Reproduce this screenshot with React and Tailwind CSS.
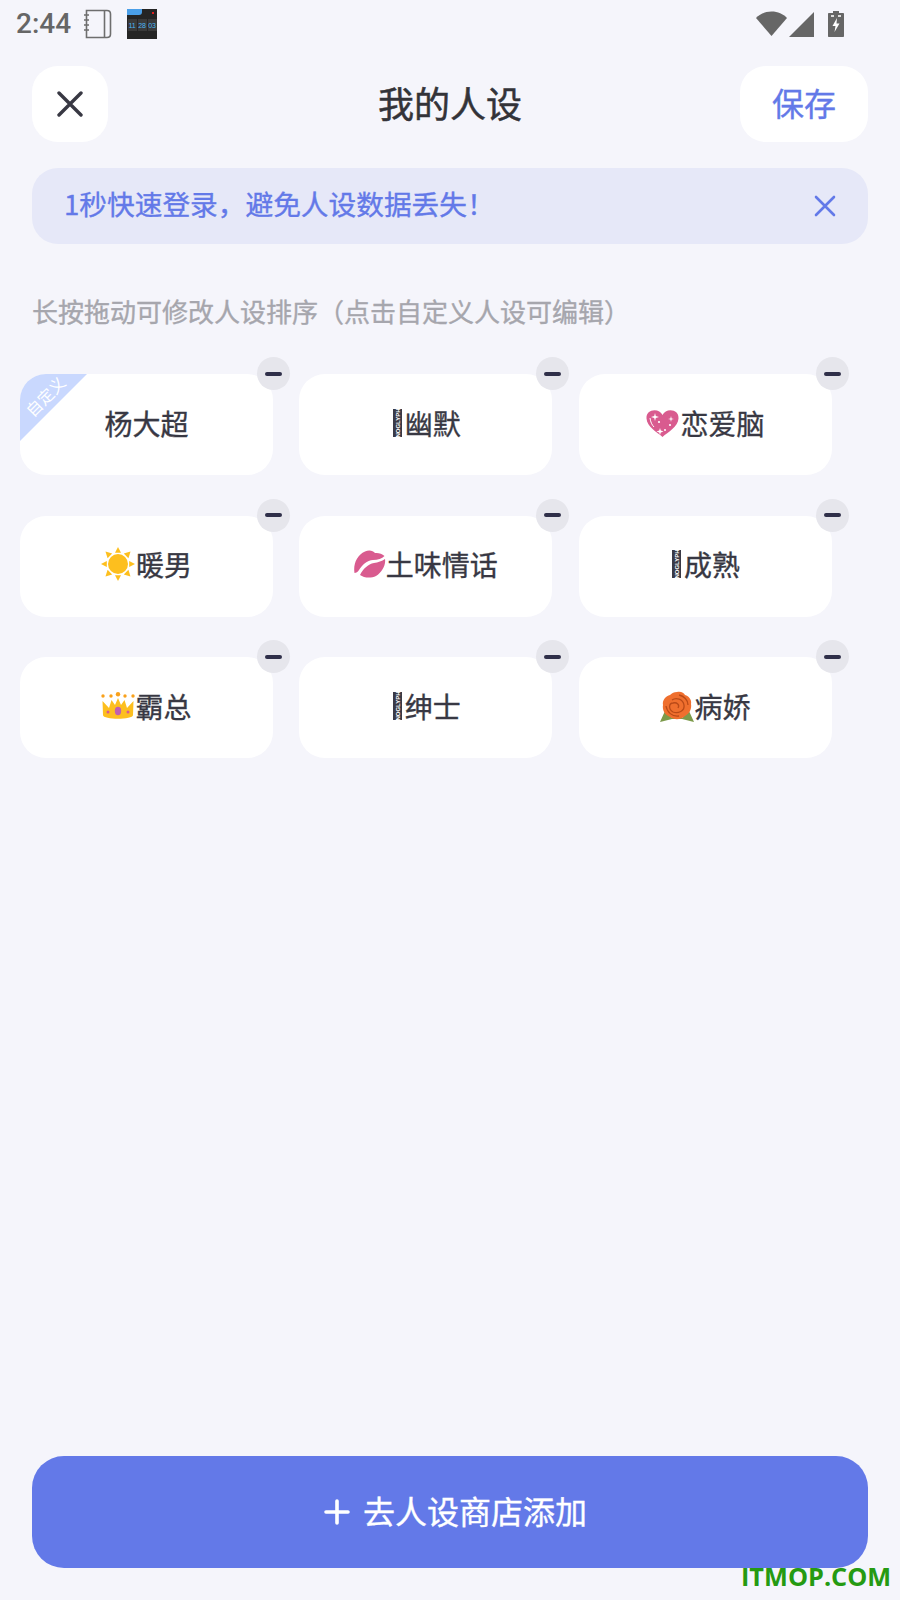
import React from "react";

const NoGlyph = () => (
  <span className="ml-[2px] mr-[3px] flex h-[28px] w-[9px] items-center justify-center bg-[#3a3a46]">
    <span className="block -rotate-90 whitespace-nowrap font-['Liberation_Sans',sans-serif] text-[6px] font-bold leading-none text-white [-webkit-text-stroke:0]">
      NOGLYPH
    </span>
  </span>
);

const Heart = () => (
  <svg width="33" height="28" viewBox="0 0 33 28" className="mr-[2px] mt-[3px]">
    <path d="M16.5 27 C11 22 1 17 .5 8.5 C.2 3 4 .3 8.5 .3 C12 .3 15 2 16.5 5 C18 2 21 .3 24.5 .3 C29 .3 32.8 3 32.5 8.5 C32 17 22 22 16.5 27Z" fill="#d95b8f" />
    <g fill="#fff">
      <path d="M9 3 L9.8 6 L13 7 L9.8 8 L9 11 L8.2 8 L5 7 L8.2 6Z" />
      <path d="M25 6 L25.6 8.4 L28 9 L25.6 9.6 L25 12 L24.4 9.6 L22 9 L24.4 8.4Z" />
      <path d="M14 18 L14.8 20.5 L17.5 21.5 L14.8 22.5 L14 25 L13.2 22.5 L10.5 21.5 L13.2 20.5Z" />
      <circle cx="13" cy="12" r="1.1" />
      <circle cx="24" cy="15" r="1.1" />
      <circle cx="19" cy="20" r="1" />
    </g>
    <path d="M4 8 C4.5 12 6 15 8 17" stroke="#fff" strokeWidth="1" fill="none" />
  </svg>
);

const Sun = () => (
  <svg width="34" height="34" viewBox="0 0 34 34" className="mr-[1px]">
    <g fill="#fdbf1e">
      <circle cx="17" cy="17" r="10" />
      <path d="M17 0 L20 5.8 H14Z" />
      <path d="M17 34 L20 28.2 H14Z" />
      <path d="M0 17 L5.8 14 V20Z" />
      <path d="M34 17 L28.2 14 V20Z" />
      <path d="M4.5 4.5 L11.2 6.6 L6.6 11.2Z" />
      <path d="M29.5 4.5 L22.8 6.6 L27.4 11.2Z" />
      <path d="M4.5 29.5 L11.2 27.4 L6.6 22.8Z" />
      <path d="M29.5 29.5 L22.8 27.4 L27.4 22.8Z" />
    </g>
  </svg>
);

const Kiss = () => (
  <svg width="32" height="28" viewBox="0 0 32 28">
    <path d="M.5 23 C-1 14 3 5 11 1.5 C15 -.5 19 .5 21 3 C24 2.5 28 3.5 30.5 6 C28 8.5 24 10 19 10 C13 10.5 8 15 5 20 C4 22 2 23 .5 23Z" fill="#d95b8f" />
    <path d="M6 25 C9 19 14 14 20 13 C24 12.5 28 11 31 9 C32 15 28 22 22 26 C17 28.5 10 28 6 25Z" fill="#d95b8f" />
  </svg>
);

const Crown = () => (
  <svg width="34" height="28" viewBox="0 0 34 28">
    <path d="M1.5 9 L8 16 L10.5 8 L14 13 L17 6 L20 13 L23.5 8 L26 16 L32.5 9 L32 23 C32 28 2 28 2 23Z" fill="#fdbf1e" />
    <ellipse cx="17" cy="19" rx="3.2" ry="4.2" fill="#c05fae" />
    <circle cx="7" cy="20" r="1.5" fill="#d95b8f" />
    <circle cx="27" cy="20" r="1.5" fill="#d95b8f" />
    <circle cx="2" cy="4" r="1.7" fill="#f9a11b" />
    <circle cx="10" cy="4" r="1.7" fill="#f9a11b" />
    <circle cx="17" cy="2.2" r="2.2" fill="#f9a11b" />
    <circle cx="24" cy="4" r="1.7" fill="#f9a11b" />
    <circle cx="32" cy="4" r="1.7" fill="#f9a11b" />
  </svg>
);

const Rose = () => (
  <svg width="34" height="32" viewBox="0 0 34 32" className="mr-[1px] mt-[2px]">
    <path d="M0 31 L5 20 L12 27 L22 27 L29 20 L34 31 L22 28 L12 28Z" fill="#7c9a4a" />
    <path d="M17 1 C21 0 24 2 25 4 C29 5 32 9 31 13 C32 18 29 23 25 25 C21 29 14 29 10 26 C5 24 2 19 3 14 C2 9 6 5 10 4 C12 2 14 1 17 1Z" fill="#ef6f2e" />
    <g fill="none" stroke="#b94a18" strokeWidth="1.3">
      <path d="M12 9 C16 6 23 8 24 14 C25 20 18 23 13 21 C8 18 9 12 13 12 C17 11 20 14 18 17" />
      <path d="M6 15 C7 21 12 26 19 25" />
      <path d="M19 4 C24 5 28 9 28 14" />
    </g>
  </svg>
);

const items = [
  { name: "杨大超", custom: true },
  { name: "幽默", icon: <NoGlyph /> },
  { name: "恋爱脑", icon: <Heart /> },
  { name: "暖男", icon: <Sun /> },
  { name: "土味情话", icon: <Kiss /> },
  { name: "成熟", icon: <NoGlyph /> },
  { name: "霸总", icon: <Crown /> },
  { name: "绅士", icon: <NoGlyph /> },
  { name: "病娇", icon: <Rose /> },
];

const Card = ({ name, icon, custom }) => (
  <div className="relative flex h-[101px] items-center justify-center rounded-[26px] bg-white text-[28px] leading-none text-[#383843] [-webkit-text-stroke:0.35px_currentColor]">
    {custom && (
      <>
        <div className="absolute inset-0 overflow-hidden rounded-[26px]">
          <div className="h-[67px] w-[67px] bg-[#c9d8fe] [clip-path:polygon(0_0,100%_0,0_100%)]" />
        </div>
        <span className="absolute left-[-5px] top-[14px] block w-[60px] -rotate-45 text-center text-[16px] leading-none text-white [-webkit-text-stroke:0]">
          自定义
        </span>
      </>
    )}
    <span className="relative flex items-center pb-[4px]">
      {icon}
      {name}
    </span>
    <span className="absolute right-[-17px] top-[-17px] flex h-[33px] w-[33px] items-center justify-center rounded-full bg-[#e6e6ec]">
      <span className="block h-[4px] w-[17px] rounded-full bg-[#30304a]" />
    </span>
  </div>
);

export default function App() {
  return (
    <div className="relative flex h-[1600px] w-[900px] flex-col overflow-hidden bg-[#f5f5fb] font-['Noto_Sans_CJK_SC','Noto_Sans',sans-serif]">
      {/* status bar */}
      <div className="flex h-[48px] items-center pl-[16px] pr-[56px] text-[#666666]">
        <span className="font-['Roboto',sans-serif] text-[28px] font-medium leading-none">2:44</span>
        <svg width="28" height="30" viewBox="0 0 28 30" className="ml-[13px]" fill="none" stroke="#6e6e6e" strokeWidth="1.6">
          <path d="M2.5 1.5 H23 C25 1.5 26.5 3 26.5 5 V25 C26.5 27 25 28.5 23 28.5 H2.5Z" />
          <path d="M20.5 1.5 V28.5" />
          <path d="M0 6 H5 M0 11 H5 M0 16 H5 M0 21 H5" />
        </svg>
        <div className="ml-[15px] flex h-[30px] w-[30px] flex-col bg-[#252525]">
          <div className="flex h-[9px] items-start justify-between pr-[3px]">
            <span className="block h-[6px] w-[15px] rounded-br-[3px] bg-[#4a9fe8]" />
            <span className="mt-[3px] block h-[2px] w-[2px] bg-[#e02020]" />
          </div>
          <div className="mt-[1px] flex justify-center gap-[1px]">
            {["11", "28", "03"].map((t) => (
              <span key={t} className="flex h-[12px] w-[9px] items-center justify-center bg-[#3a3a3a] font-['Liberation_Sans',sans-serif] text-[7px] leading-none text-[#4cb6f2]">
                {t}
              </span>
            ))}
          </div>
        </div>
        <svg width="58" height="26" viewBox="0 0 58 26" className="ml-auto mr-[14px] shrink-0">
          <path d="M0 7 C4 3 9 .5 15.5 .5 C22 .5 27 3 31 7 L15.5 25Z" fill="#666" />
          <path d="M33 26 L58 1 V26Z" fill="#666" />
        </svg>
        <svg width="16" height="26" viewBox="0 0 16 26" className="shrink-0">
          <path d="M5 0 H11 V2 H15 C15.6 2 16 2.4 16 3 V25 C16 25.6 15.6 26 15 26 H1 C.4 26 0 25.6 0 25 V3 C0 2.4 .4 2 1 2 H5Z" fill="#666" />
          <path d="M9 7 L4.5 15 H7.5 L6.5 21 L11.5 12.5 H8.5Z" fill="#fff" />
          <path d="M3 4 H6 V6 H3Z M10 4 H13 V6 H10Z" fill="#ddd" />
        </svg>
      </div>

      {/* header */}
      <div className="mt-[18px] grid h-[76px] grid-cols-[128px_1fr_128px] items-center px-[32px]">
        <button className="flex h-[76px] w-[76px] items-center justify-center rounded-[26px] bg-white">
          <svg width="26" height="26" viewBox="0 0 26 26" fill="none" stroke="#383843" strokeWidth="3.4" strokeLinecap="round">
            <path d="M2 2 L24 24 M24 2 L2 24" />
          </svg>
        </button>
        <h1 className="pb-[5px] text-center text-[36px] font-normal leading-none text-[#333338] [-webkit-text-stroke:0.5px_currentColor]">我的人设</h1>
        <button className="flex h-[76px] w-[128px] items-center justify-center rounded-[26px] bg-white pb-[5px] text-[32px] leading-none text-[#6379e8] [-webkit-text-stroke:0.35px_currentColor]">
          保存
        </button>
      </div>

      {/* banner */}
      <div className="mx-[32px] mt-[26px] flex h-[76px] items-center justify-between rounded-[26px] bg-[#e6e8f8] pl-[32px] pr-[32px]">
        <span className="pb-[4px] text-[27.7px] leading-none text-[#6379e8] [-webkit-text-stroke:0.35px_currentColor]">1秒快速登录，避免人设数据丢失！</span>
        <svg width="22" height="22" viewBox="0 0 22 22" fill="none" stroke="#6379e8" strokeWidth="2.6" strokeLinecap="round">
          <path d="M2 2 L20 20 M20 2 L2 20" />
        </svg>
      </div>

      {/* hint */}
      <p className="mt-[52px] pl-[32px] text-[26px] leading-[30px] text-[#a6a6ad] [-webkit-text-stroke:0.35px_currentColor]">
        长按拖动可修改人设排序（点击自定义人设可编辑）
      </p>

      {/* grid */}
      <div className="mt-[48px] grid grid-cols-[253px_253px_253px] gap-x-[26.3px] gap-y-[40.5px] pl-[20px]">
        {items.map((it) => (
          <Card key={it.name} {...it} />
        ))}
      </div>

      {/* bottom button */}
      <div className="mt-auto px-[32px] pb-[32px]">
        <button className="flex h-[112px] w-full items-center justify-center rounded-[32px] bg-[#6379e8] pl-[11px] text-[32px] leading-none text-white [-webkit-text-stroke:0.35px_currentColor]">
          <svg width="26" height="26" viewBox="0 0 26 26" className="mr-[13px]" fill="none" stroke="#fff" strokeWidth="3.6" strokeLinecap="round">
            <path d="M13 2 V24 M2 13 H24" />
          </svg>
          <span className="pb-[4px]">去人设商店添加</span>
        </button>
      </div>

      {/* watermark */}
      <span className="absolute left-[741px] top-[1561px] font-['Open_Sans','Noto_Sans',sans-serif] text-[25.3px] font-bold leading-[30px] text-[#259a12]">
        ITMOP.COM
      </span>
    </div>
  );
}
